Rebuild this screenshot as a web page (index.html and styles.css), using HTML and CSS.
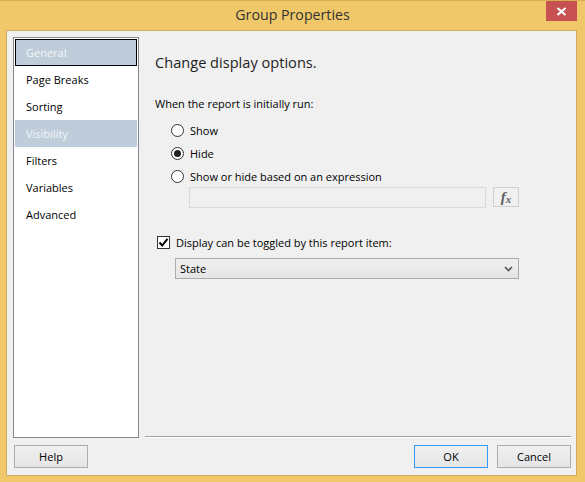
FILE: index.html
```html
<!DOCTYPE html>
<html>
<head>
<meta charset="utf-8">
<link rel="stylesheet" href="styles.css">
</head>
<body>
<div class="window">
  <div class="titlebar">
    <div class="title">Group Properties</div>
    <div class="close">
      <svg width="11" height="9" viewBox="0 0 11 9"><path d="M1.5 1 L9.5 8 M9.5 1 L1.5 8" stroke="#fff" stroke-width="2.2"/></svg>
    </div>
  </div>
  <div class="client">
    <div class="main">
      <ul class="nav">
        <li class="item selected focus">General</li>
        <li class="item">Page Breaks</li>
        <li class="item">Sorting</li>
        <li class="item selected">Visibility</li>
        <li class="item">Filters</li>
        <li class="item">Variables</li>
        <li class="item">Advanced</li>
      </ul>
      <div class="pane">
        <h1 class="heading">Change display options.</h1>
        <div class="label">When the report is initially run:</div>
        <div class="radios">
          <div class="radio-row"><span class="radio"></span><span>Show</span></div>
          <div class="radio-row"><span class="radio checked"></span><span>Hide</span></div>
          <div class="radio-row"><span class="radio"></span><span>Show or hide based on an expression</span></div>
        </div>
        <div class="expr-row">
          <div class="textbox"></div>
          <div class="fx"><span class="fx-f">f</span><span class="fx-x">x</span></div>
        </div>
        <div class="check-row">
          <span class="checkbox">
            <svg width="11" height="11" viewBox="0 0 11 11"><path d="M1.5 5.5 L4.2 8.5 L9.5 1.8" fill="none" stroke="#000" stroke-width="2"/></svg>
          </span>
          <span>Display can be toggled by this report item:</span>
        </div>
        <div class="select">
          <span>State</span>
          <svg width="9" height="6" viewBox="0 0 9 6"><path d="M1 1 L4.5 4.5 L8 1" fill="none" stroke="#555" stroke-width="1.6"/></svg>
        </div>
        <div class="separator"></div>
      </div>
    </div>
    <div class="buttons">
      <button class="btn">Help</button>
      <div class="spacer"></div>
      <button class="btn default">OK</button>
      <button class="btn">Cancel</button>
    </div>
  </div>
</div>
</body>
</html>
```

FILE: styles.css
```css
html, body {
  margin: 0;
  padding: 0;
}
body {
  font-family: "Open Sans", "Noto Sans", sans-serif;
  font-size: 11px;
  color: #000;
}
.window {
  width: 585px;
  height: 482px;
  box-sizing: border-box;
  background: #f0c86a;
  border-top: 1px solid #d7ae55;
  display: flex;
  flex-direction: column;
}
.titlebar {
  height: 29px;
  display: grid;
  grid-template-columns: 1fr auto 1fr;
  align-items: start;
}
.title {
  grid-column: 2;
  font-size: 14.2px;
  color: #333;
  line-height: 30px;
  margin-top: -1px;
}
.close {
  grid-column: 3;
  justify-self: end;
  margin-right: 8px;
  width: 31px;
  height: 20px;
  background: #c75050;
  display: flex;
  align-items: center;
  justify-content: center;
}
.client {
  margin: 0 8px 6px 6px;
  flex: 1;
  background: #f0f0f0;
  border: 1px solid #cfac5e;
  padding: 6px 5px 7px 6px;
  display: flex;
  flex-direction: column;
}
.main {
  display: flex;
  height: 401px;
}
.nav {
  list-style: none;
  margin: 0;
  padding: 1px;
  width: 126px;
  box-sizing: border-box;
  background: #fff;
  border: 1px solid #828790;
}
.item {
  height: 27px;
  line-height: 27px;
  padding-left: 11px;
  box-sizing: border-box;
}
.item.selected {
  background: #bfcddb;
  color: #f4f6f8;
}
.item.focus {
  border: 1px solid #000;
  padding-left: 10px;
  line-height: 25px;
}
.pane {
  flex: 1;
  display: flex;
  flex-direction: column;
  padding-left: 16px;
}
.heading {
  margin: 15px 0 0 0;
  font-weight: normal;
  font-size: 14.6px;
  line-height: 20px;
  color: #1e1e1e;
}
.label {
  margin-top: 24px;
  line-height: 16px;
}
.radios {
  margin-top: 7px;
  display: flex;
  flex-direction: column;
  gap: 1px;
  padding-left: 16px;
}
.radio-row {
  height: 22px;
  display: flex;
  align-items: center;
  gap: 6px;
}
.radio {
  width: 11px;
  height: 11px;
  border: 1px solid #333;
  border-radius: 50%;
  background: #fff;
  display: flex;
  align-items: center;
  justify-content: center;
}
.radio.checked::after {
  content: "";
  width: 7px;
  height: 7px;
  border-radius: 50%;
  background: #222;
}
.expr-row {
  display: flex;
  gap: 7px;
  margin-left: 34px;
  align-items: flex-start;
}
.textbox {
  width: 297px;
  height: 21px;
  box-sizing: border-box;
  border: 1px solid #d9d9d9;
  background: #f0f0f0;
}
.fx {
  width: 26px;
  height: 20px;
  box-sizing: border-box;
  border: 1px solid #d0d0d0;
  display: flex;
  align-items: center;
  justify-content: center;
  font-family: "Liberation Serif", serif;
  font-style: italic;
  font-weight: bold;
  color: #606060;
  font-size: 15px;
  line-height: 1;
}
.fx-x {
  font-size: 11px;
  margin-top: 4px;
}
.check-row {
  margin-top: 25px;
  height: 19px;
  display: flex;
  align-items: center;
  gap: 6px;
  margin-left: 2px;
}
.checkbox {
  width: 13px;
  height: 13px;
  box-sizing: border-box;
  border: 1px solid #333;
  background: #fff;
  display: flex;
  align-items: center;
  justify-content: center;
}
.select {
  margin-top: 6px;
  margin-left: 20px;
  width: 344px;
  height: 21px;
  box-sizing: border-box;
  border: 1px solid #acacac;
  background: linear-gradient(#efefef, #e5e5e5);
  display: flex;
  align-items: center;
  justify-content: space-between;
  padding: 0 5px 0 4px;
}
.separator {
  margin-top: auto;
  margin-left: -10px;
  height: 1px;
  background: #a0a0a0;
  border-bottom: 1px solid #fff;
}
.buttons {
  margin-top: 7px;
  display: flex;
  gap: 9px;
  padding-left: 1px;
}
.spacer {
  flex: 1;
}
.btn {
  width: 74px;
  height: 23px;
  box-sizing: border-box;
  border: 1px solid #acacac;
  background: linear-gradient(#f0f0f0, #e5e5e5);
  font-family: "Open Sans", "Noto Sans", sans-serif;
  font-size: 11px;
  color: #000;
  padding: 0;
}
.btn.default {
  border-color: #3399ff;
}
```
